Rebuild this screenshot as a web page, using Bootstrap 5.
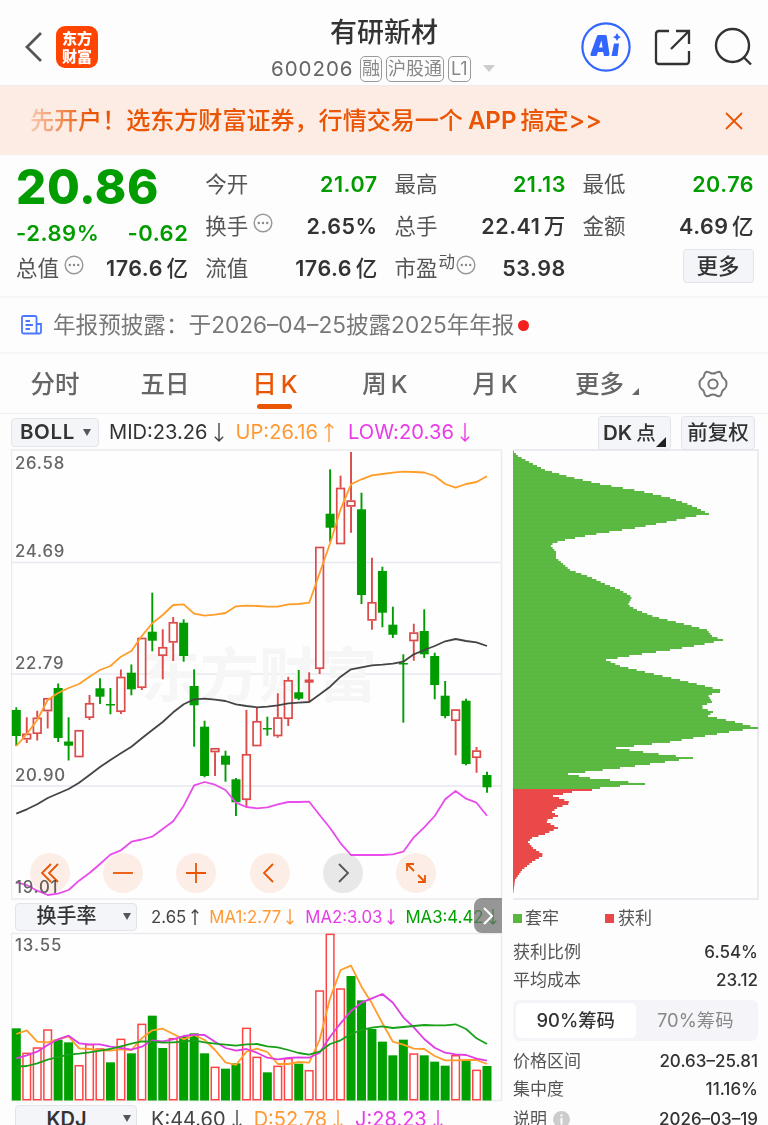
<!DOCTYPE html>
<html lang="zh-CN">
<head>
<meta charset="utf-8">
<meta name="viewport" content="width=device-width, initial-scale=1">
<title>有研新材 600206</title>
<link href="https://cdn.jsdelivr.net/npm/bootstrap@5.3.0/dist/css/bootstrap.min.css" rel="stylesheet">
<style>
:root{--ink:#333;--mute:#666;--down:#009c00;--brand:#ea5504;--mid:#f93;--low:#e83ce8}
body{font-family:Inter,"Noto Sans CJK SC",sans-serif;color:var(--ink);background:#fdfdfd;width:768px;height:1125px;overflow:hidden;line-height:1;-webkit-font-smoothing:antialiased}
svg{display:block;flex:none}
.topbar{height:86px;border-bottom:1px solid #ecebf0;padding:0 14px 0 25px}
.brandbox{width:42px;height:42px;border-radius:9px;background:#ff4400;color:#fff;font:900 15px/18px "Noto Sans CJK SC",sans-serif;margin-left:13px;padding-top:3px}
.stock{position:absolute;left:0;right:0;top:0;width:768px;pointer-events:none}
.stock h1{font-size:27px;font-weight:500;line-height:30px;margin:18px 0 0}
.codeline{margin:8px 0 0 271px}
.code{font-size:20.5px;letter-spacing:.95px;color:var(--mute);line-height:26px;width:89px;text-align:left}
.tagbox{border:1.5px solid #999;border-radius:5px;height:26px;line-height:24px;font-size:18px;color:#888;padding:0 1px}
.banner{height:69px;background:#fcece4;color:var(--brand);font-size:24.05px;font-weight:500;line-height:69px;padding:0 25px 0 30px}
.fadein{background:linear-gradient(90deg,#f8c9b0,#ea5504 60px);-webkit-background-clip:text;background-clip:text;color:transparent}
.quote{height:143px;border-bottom:2px solid #f5f5f8;padding:9px 14px 0 16px;display:grid;grid-template-columns:172px 172px 171px 171px;column-gap:17.2px}
.cell{height:42px;font-size:21.5px;font-weight:500}
.cell .lab{font-weight:400;color:#555}
.cell .num{letter-spacing:.55px;font-weight:600;margin-right:-.5px}
.grn{color:var(--down)}
.price{font-size:47.5px;font-weight:800;letter-spacing:.6px;height:48px;line-height:46px;color:var(--down)}
.chg .num{font-size:22px}
.pill{background:#f3f5f8;border:1.5px solid #e3e4e9;border-radius:4px}
.notice{height:56px;border-bottom:2px solid #f5f5f8;padding-left:21px;font-size:22.6px;color:#777}
.dot{width:11px;height:11px;border-radius:50%;background:#f42020;margin-left:4px}
.tabs{height:60px;border-bottom:1px solid #f0f0f4;font-size:24.5px;font-weight:500;color:var(--mute);position:relative}
.tabs>div{width:110px;text-align:center;line-height:61px;position:relative;white-space:nowrap}
.tabs .on{color:var(--brand)}
.tabs .on:after{content:"";position:absolute;left:37px;bottom:4px;width:35px;height:5px;border-radius:3px;background:var(--brand)}
.legend{height:35px;padding:2px 0 0 11px;font-size:20.5px}
.legend .pill{height:29px;font-weight:600}
.legend>span{font-size:20.1px}
.kline{position:relative;width:491px;margin-left:11px}
.tools{position:absolute;left:19px;top:404px;mix-blend-mode:multiply}
.tools>span{width:40px;height:40px;border-radius:50%;background:rgba(252,226,212,.55);display:flex;align-items:center;justify-content:center}
.tools .off{background:rgba(215,215,215,.55)}
.chips{width:245px;margin-left:11px}
.chips .kv{height:28px;font-size:17px;color:#555}
.chips .kv b{font-weight:500;color:#333;font-size:17px}
.seg{height:41px;background:#f5f5f9;border-radius:6px;padding:3px;font-size:18.4px;margin:6px 0}
.seg>div{flex:1;text-align:center;line-height:35px;border-radius:5px}
.ind{height:32px;padding:2px 0 0 4px;font-size:16.8px;position:relative}
.ind .pill{width:122px;height:28px;font-size:20px;font-weight:500;position:relative;text-align:center;line-height:25px;padding-right:19px}
.ind .pill svg{position:absolute;right:4px;top:9px}
.more{position:absolute;left:463px;top:-2px;width:28px;height:35px;background:rgba(110,110,110,.72);border-radius:8px 0 0 8px;display:flex;align-items:center;justify-content:center}
</style>
</head>
<body>
<header class="topbar d-flex align-items-center position-relative">
  <svg width="18" height="30" viewBox="0 0 18 30" class="mt-2"><path d="M16 1 2 15 16 29" fill="none" stroke="#555" stroke-width="2.8"/></svg>
  <div class="brandbox text-center mt-2">东方<br>财富</div>
  <div class="stock text-center">
    <h1>有研新材</h1>
    <div class="codeline d-flex align-items-center"><span class="code">600206</span><span class="tagbox me-1">融</span><span class="tagbox me-1">沪股通</span><span class="tagbox" style="padding:0 2px">L1</span>
      <svg width="12" height="8" style="margin-left:12px"><path d="M0 0H12L6 7Z" fill="#ccc"/></svg></div>
  </div>
  <div class="ms-auto d-flex align-items-center mt-2">
    <svg width="50" height="50" viewBox="0 0 50 50" fill="#3366ff"><circle cx="25" cy="25" r="23.6" fill="none" stroke="#3366ff" stroke-width="2.2"/><path fill-rule="evenodd" d="M17.500 13H24.500Q25.500 13 25.700 14L28.500 32Q28.500 34 27 34H23L22.200 30H17L15.500 34H10.500Q9 34 9.500 32L16 14Q16.500 13 17.500 13ZM20.500 18.500 18 25.500H21.500ZM33 21.500h5L36.500 34H30.500ZM36 11q.8 3 4 4-3.200 1-4 4-.8-3-4-4 3.200-1 4-4Z"/></svg>
    <svg width="38" height="38" viewBox="0 0 38 38" style="margin-left:23px" fill="none" stroke="#333" stroke-width="2.3"><path d="M15 3H5Q2 3 2 6V33Q2 36 5 36H32Q35 36 35 33V23M22 3H35V16M35 3 17 21"/></svg>
    <svg width="40" height="40" viewBox="0 0 40 40" style="margin-left:22px" fill="none" stroke="#333" stroke-width="2.4"><circle cx="18.500" cy="18.500" r="16.500"/><path d="M29.500 30 37 37.500"/></svg>
  </div>
</header>

<div class="banner d-flex align-items-center"><span class="fadein">先开户！</span><span>选东方财富证券，行情交易一个</span><span style="margin:0 4px 0 5px;font-weight:600">APP</span><span>搞定</span><span style="font-size:25px">&gt;&gt;</span>
  <svg class="ms-auto" width="18" height="18" viewBox="0 0 18 18"><path d="M1 1 17 17M17 1 1 17" stroke="#ea5504" stroke-width="1.8"/></svg></div>

<section class="quote">
  <div>
    <div class="price">20.86</div>
    <div class="cell chg grn d-flex align-items-center justify-content-between"><span class="num">-2.89%</span><span class="num">-0.62</span></div>
    <div class="cell d-flex align-items-center" style="height:30px"><span class="lab">总值</span><svg class="dots"></svg><span class="ms-auto num">176.6</span><span class="ms-1">亿</span></div>
  </div>
  <div>
    <div class="cell d-flex align-items-center"><span class="lab">今开</span><span class="ms-auto num grn">21.07</span></div>
    <div class="cell d-flex align-items-center"><span class="lab">换手</span><svg class="dots"></svg><span class="ms-auto num">2.65%</span></div>
    <div class="cell d-flex align-items-center"><span class="lab">流值</span><span class="ms-auto num">176.6</span><span class="ms-1">亿</span></div>
  </div>
  <div>
    <div class="cell d-flex align-items-center"><span class="lab">最高</span><span class="ms-auto num grn">21.13</span></div>
    <div class="cell d-flex align-items-center"><span class="lab">总手</span><span class="ms-auto num">22.41</span><span class="ms-1">万</span></div>
    <div class="cell d-flex align-items-center"><span class="lab">市盈</span><span class="lab" style="font-size:16.500px;margin:0 0 13px 1px">动</span><svg class="dots" data-tight></svg><span class="ms-auto num">53.98</span></div>
  </div>
  <div>
    <div class="cell d-flex align-items-center"><span class="lab">最低</span><span class="ms-auto num grn">20.76</span></div>
    <div class="cell d-flex align-items-center"><span class="lab">金额</span><span class="ms-auto num">4.69</span><span class="ms-1">亿</span></div>
    <div class="pill cell ms-auto text-center" style="width:71px;height:34px;line-height:33px;margin-top:1px">更多</div>
  </div>
</section>

<div class="notice d-flex align-items-center">
  <svg width="21" height="20" viewBox="0 0 21 20" fill="none" stroke="#4a78ff" stroke-width="1.800"><path d="M15.500 18.500V2.500Q15.500 1 14 1H2.500Q1 1 1 2.500V17Q1 18.500 2.500 18.500H18.500Q20 18.500 20 17V9H15.500M4.500 6H9M4.500 10H12M4.500 14H9"/></svg>
  <span style="margin-left:11px">年报预披露：</span><span>于2026–04–25披露2025年年报</span><span class="dot"></span>
</div>

<nav class="tabs d-flex">
  <div>分时</div><div>五日</div><div class="on">日<span class="ms-1">K</span></div><div>周<span class="ms-1">K</span></div><div>月<span class="ms-1">K</span></div>
  <div style="width:98px;padding-left:1px">更多</div>
  <svg width="8" height="8" style="margin:34px 0 0 -16px"><path d="M7 0V7H0Z" fill="#666"/></svg>
  <svg width="30" height="30" viewBox="-15 -15 30 30" style="margin:15px 0 0 58px" fill="none" stroke="#777" stroke-width="2"><circle r="4.600"/><path stroke-linejoin="round" d="M-6.500-12.300Q-4-12.300-2.500-11Q0-9.800 2.500-11Q4-12.300 6.500-12.300Q8.800-11 8.800-8.500Q9.300-6 11.500-5Q13.500-3.500 13.500 0Q13.500 3.500 11.500 5Q9.300 6 8.800 8.500Q8.800 11 6.500 12.300Q4 12.300 2.500 11Q0 9.800-2.500 11Q-4 12.300-6.500 12.300Q-8.800 11-8.800 8.500Q-9.300 6-11.500 5Q-13.500 3.500-13.500 0Q-13.500-3.500-11.500-5Q-9.300-6-8.800-8.500Q-8.800-11-6.500-12.300Z"/></svg>
</nav>

<div class="legend d-flex align-items-center">
  <div class="pill d-flex align-items-center" style="width:88px;padding-left:8px"><span style="letter-spacing:.6px">BOLL</span><svg width="8" height="8" style="margin-left:8px"><path d="M0 0H8L4 7Z" fill="#555"/></svg></div>
  <span style="margin-left:10px">MID:23.26</span><svg class="arr" data-c="#444"></svg>
  <span style="margin-left:12px;color:var(--mid)">UP:26.16</span><svg class="arr" data-c="#f93" data-up></svg>
  <span style="margin-left:14px;color:var(--low);letter-spacing:.1px">LOW:20.36</span><svg class="arr" data-c="#e83ce8"></svg>
  <div class="ms-auto pill" style="width:73px;height:34px;padding:0 0 0 4px;line-height:32px;white-space:nowrap;position:relative">DK<span class="ms-1" style="font-size:19.500px;font-weight:500">点</span><svg width="10" height="10" style="position:absolute;right:4px;bottom:2px"><path d="M10 0V10H0Z" fill="#222"/></svg></div>
  <div class="pill text-center" style="width:74px;height:34px;margin:0 13px 0 10px;line-height:32px;font-weight:500">前复权</div>
</div>

<main class="d-flex">
  <div class="kline">
    <svg id="k" width="492" height="451" viewBox="11 449 492 451"></svg>
    <div class="tools d-flex" id="tools">
      <span><svg width="18" height="20" fill="none" stroke="#ea5504" stroke-width="1.800"><path d="M10 1 1 10 10 19M17 1 8 10 17 19"/></svg></span>
      <span><svg width="20" height="20" stroke="#ea5504" stroke-width="1.800"><path d="M0 10H20"/></svg></span>
      <span><svg width="20" height="20" stroke="#ea5504" stroke-width="1.800"><path d="M0 10H20M10 0V20"/></svg></span>
      <span><svg width="12" height="20" fill="none" stroke="#ea5504" stroke-width="1.800" style="margin-right:3px"><path d="M11 1 2 10 11 19"/></svg></span>
      <span class="off"><svg width="12" height="20" fill="none" stroke="#555" stroke-width="1.800" style="margin-left:3px"><path d="M1 1 10 10 1 19"/></svg></span>
      <span><svg width="20" height="20" fill="none" stroke="#ea5504" stroke-width="1.800"><path d="M1 8V1H8M1 1 8 8M12 19H19V12M19 19 12 12"/></svg></span>
    </div>
    <div class="ind d-flex align-items-center">
      <div class="pill">换手率<svg width="9" height="8"><path d="M0 0H8L4 7Z" fill="#555"/></svg></div>
      <span style="margin-left:14px;color:#444">2.65</span><svg class="arr" data-c="#444" data-s data-up></svg>
      <span style="margin-left:10px;color:var(--mid)">MA1:2.77</span><svg class="arr" data-c="#f93" data-s></svg>
      <span style="margin-left:11px;color:var(--low)">MA2:3.03</span><svg class="arr" data-c="#e83ce8" data-s></svg>
      <span style="margin-left:10px;color:#00a000">MA3:4.42</span><svg class="arr" data-c="#00a000" data-s></svg>
      <div class="more"><svg width="10" height="18" fill="none" stroke="#fff" stroke-width="2"><path d="M1 1 9 9 1 17"/></svg></div>
    </div>
    <svg id="v" width="492" height="170" viewBox="11 932 492 170"></svg>
    <div class="ind d-flex align-items-center" style="font-size:20px">
      <div class="pill" style="line-height:27px;font-weight:600">KDJ<svg width="9" height="8"><path d="M0 0H8L4 7Z" fill="#555"/></svg></div>
      <span style="margin-left:14px;color:#444">K:44.60</span><svg class="arr" data-c="#444"></svg>
      <span style="margin-left:12px;color:var(--mid)">D:52.78</span><svg class="arr" data-c="#f93"></svg>
      <span style="margin-left:12px;color:var(--low)">J:28.23</span><svg class="arr" data-c="#e83ce8"></svg>
    </div>
  </div>
  <div class="chips">
    <svg id="c" width="247" height="451" viewBox="513 449 247 451"></svg>
    <div class="d-flex align-items-center" style="height:36px;margin-bottom:2px;font-size:17px;color:#555"><svg width="9" height="9"><path d="M0 0H9V9H0Z" fill="#5ab73e"/></svg><span style="margin-left:3px">套牢</span><svg width="9" height="9" style="margin-left:46px"><path d="M0 0H9V9H0Z" fill="#ea4848"/></svg><span style="margin-left:4px">获利</span></div>
    <div class="kv d-flex align-items-center justify-content-between">获利比例<b>6.54%</b></div>
    <div class="kv d-flex align-items-center justify-content-between">平均成本<b>23.12</b></div>
    <div class="seg d-flex"><div class="bg-white" style="font-weight:500">90%筹码</div><div style="color:#888">70%筹码</div></div>
    <div class="kv d-flex align-items-center justify-content-between">价格区间<b>20.63–25.81</b></div>
    <div class="kv d-flex align-items-center justify-content-between">集中度<b>11.16%</b></div>
    <div class="kv d-flex align-items-center justify-content-between" style="height:32px"><span class="d-flex align-items-center">说明<svg width="17" height="17" style="margin-left:6px"><circle cx="8.500" cy="8.500" r="8.500" fill="#ccc"/><path d="M8.500 3.500V5.500M8.500 7V13.500" stroke="#fff" stroke-width="2"/></svg></span><b>2026–03–19</b></div>
  </div>
</main>

<script src="https://cdn.jsdelivr.net/npm/bootstrap@5.3.0/dist/js/bootstrap.bundle.min.js"></script>
<script>
// Small repeated glyphs
document.querySelectorAll('.dots').forEach(s=>{
  s.setAttribute('width',20);s.setAttribute('height',20);
  s.style.margin='-9px 0 0 '+('tight' in s.dataset?1:5)+'px';
  s.innerHTML='<circle cx="10" cy="10" r="8.800" fill="none" stroke="#999" stroke-width="1.500"/><g fill="#888"><circle cx="5.800" cy="10" r="1.200"/><circle cx="10" cy="10" r="1.200"/><circle cx="14.200" cy="10" r="1.200"/></g>';
});
document.querySelectorAll('.arr').forEach(s=>{
  const small='s' in s.dataset,h=small?16:19,w=small?8:10;
  s.setAttribute('width',w);s.setAttribute('height',h);s.style.marginLeft=small?'5px':'6px';
  const m=w/2,a=m-.8;
  const d='up' in s.dataset?`M${m} ${h}V1M${m-a} ${1+a}L${m} 1L${m+a} ${1+a}`:`M${m} 0V${h-1}M${m-a} ${h-1-a}L${m} ${h-1}L${m+a} ${h-1-a}`;
  s.innerHTML=`<path d="${d}" fill="none" stroke="${s.dataset.c}" stroke-width="1.400"/>`;
});
const X=i=>16.3+i*10.46, GREEN='#009c00', RED='#dc4a4a';
const line=(a,c,f=v=>v)=>`<polyline fill="none" stroke="${c}" stroke-width="1.800" stroke-linejoin="round" points="${a.map((v,i)=>X(i).toFixed(1)+','+f(v)).join(' ')}"/>`;
// Daily candles: direction, high, body top, body bottom, low
const candles=[['g',707.3,710,736,746],['r',717.3,733.5,739.5,743],['r',710.7,717.5,734,740.5],['r',698,698,711.3,728.5],['g',683.5,688,738,742],['g',717.3,741.5,745.7,760.5],['r',730,730,757.3,757.3],['r',695,703,718,720],['g',678.3,688.3,696.7,704],['g',688,704,705.5,714.3],['r',669.5,676.7,712,714],['g',664.5,672.7,689.3,695.3],['r',637.7,637.7,688,690],['g',592.7,631.7,640.7,651.3],['r',629.3,647,656,679.3],['r',617,622,642.7,661],['g',619.3,622.7,656,661.7],['g',669.3,686,705.3,746.7],['g',720.7,726.7,776,777.3],['r',748,748,752.3,776],['g',750.7,755.7,764.7,781.7],['g',778,779.3,802.3,816],['r',710,754,800,807.3],['r',707.3,721,746.3,746.3],['g',716.7,728,729.5,735.7],['r',693.3,717.3,736.3,737.7],['r',676.7,680,719,726],['g',670,692.3,698.7,700],['f',672.3,679.5,682.7,701.7],['r',546.7,546.7,669,674],['g',469.3,513.7,527.7,541.7],['r',475.7,487.7,544.3,544.3],['r',452,500.3,506.7,532.7],['g',492.7,509.3,595,604],['r',557.7,602,620.7,629.7],['g',566.7,571,612.7,627.3],['g',606.7,624.7,634.7,638],['g',654.3,663,664.5,722.7],['r',623.7,632.3,641.3,660.7],['g',609.3,631,654.3,658],['g',652.7,656,685,699.3],['g',681,695.7,716,718.3],['r',709.3,709.3,721,755.3],['g',698.7,700.7,764,765.3],['r',747,750.3,758,772.7],['g',771.7,775,787.3,792.7]];
const up=[746,734,720,700,693,688,684,676.7,670,666,656.7,651,636,623.3,615,605,604.3,613.7,615.7,614.7,613,606.3,605.7,606,606.7,606.7,604.3,604,602.7,573.3,543.3,509.3,484.3,479.3,475.3,474,472.7,471.7,472,472.5,476,484,487.7,484,482,476.3];
const mid=[813.7,809.3,804.3,798,793.5,789,782.7,775,767,760,753.3,746.7,738.3,730,722,712.3,704.3,699.3,698.7,699.7,701,704.3,706,707.3,706.7,705.3,703.3,702.7,702,694.5,686.7,676.7,669.3,667.3,665.3,664.7,663.7,661.7,654.3,650,646,641.3,639,641,642.3,646];
const low=[882.3,885,890.7,895,893.7,890,880.7,873,864,854.7,850.3,841.7,839.5,836.7,829,821.3,805.7,785.3,782,784.7,790,802.7,807,808.3,807.3,804.3,802,802,801.7,815,828,843.3,855,855,855,855,854.3,851.7,837.3,827.3,816,799.3,791,798.7,802.7,815.7];
let h='<rect x="11.500" y="450" width="490" height="449" fill="#fefefe" stroke="#ebebf0" stroke-width="1.500"/>';
h+='<path d="M11 562.500H502M11 674H502M11 786H502" stroke="#e6e9f0" stroke-width="1.500"/>';
h+='<text x="141" y="697" font-size="59" font-weight="700" fill="#f6f6f6" font-family="Noto Sans CJK SC">东方财富</text>';
candles.forEach(([k,hi,t,b,lo],i)=>{const x=X(i);
  if(k==='r')h+=`<path d="M${x} ${hi}V${t}M${x} ${b}V${lo}" stroke="${RED}" stroke-width="1.900"/><rect x="${x-3.8}" y="${t+.8}" width="7.600" height="${b-t-1.6}" fill="none" stroke="${RED}" stroke-width="1.700"/>`;
  else{const c=k==='g'?GREEN:RED;h+=`<path d="M${x} ${hi}V${lo}" stroke="${c}" stroke-width="1.900"/><rect x="${x-4.5}" y="${t}" width="9" height="${b-t}" fill="${c}"/>`;}
});
h+=line(up,'#ff9d28')+line(mid,'#444')+line(low,'#e94bec');
h+='<g font-size="16.800" font-weight="500" fill="#666" letter-spacing=".75">'+[['26.58',468.5],['24.69',556.5],['22.79',668.5],['20.90',780.5],['19.01',892.5]].map(([s,y])=>`<text x="15" y="${y}">${s}</text>`).join('')+'</g>';
k.innerHTML=h;
// Turnover histogram and its averages, in thirds of a pixel below y=900
const tops=[385,458,442,388,419,427,495,432,445,487,416,460,371,347,444,414,409,400,460,500,506,490,383,470,517,497,474,491,510,271,101,265,228,301,387,425,466,419,460,466,485,497,465,481,509,498];
const reds=new Set([1,2,3,6,7,8,10,12,15,19,22,23,25,26,28,29,30,31,38,42,44]);
const Y=v=>(900+v/3).toFixed(1);
const m1=[402,391,425,427,418,409,445,447,451,452,448,450,415,391,386,402,418,405,420,450,487,495,455,446,456,492,492,486,488,420,295,210,197,260,310,370,425,434,446,447,468,481,481,480,480,492];
const m2=[475,466,455,435,418,407,430,433,433,440,444,449,440,421,424,418,408,404,405,425,444,452,447,458,473,478,474,472,473,458,410,370,333,308,295,282,308,352,382,417,443,458,463,465,476,482];
const m3=[500,498,490,479,471,464,461,457,452,447,439,431,424,425,428,427,425,421,427,431,434,437,433,432,439,442,450,459,464,455,432,421,402,390,383,379,384,381,378,375,376,376,373,387,415,432];
h='<rect x="11.500" y="933.500" width="490" height="167" fill="#fefefe" stroke="#ebebf0" stroke-width="1.500"/>';
tops.forEach((t,i)=>{const x=X(i),y=900+t/3;
  h+=!reds.has(i)?`<rect x="${x-4.5}" y="${y}" width="9" height="${1100.5-y}" fill="#00a000"/>`:`<rect x="${x-3.8}" y="${y+.7}" width="7.600" height="${1099-y}" fill="none" stroke="#ff4444" stroke-width="1.500"/>`;});
h+=line(m1,'#ff9d28',Y)+line(m2,'#e03ce4',Y)+line(m3,'#18a018',Y);
h+='<text x="15" y="950.500" font-size="16.800" font-weight="500" fill="#666" letter-spacing=".9">13.55</text>';
v.innerHTML=h;
// Cost distribution outline: y, right edge
const prof=[[452,514],[456,518],[463,531],[470,545],[477,570],[484,600],[491,640],[498,670],[503,685],[508,697],[514,709],[517,690],[521,672],[528,635],[535,590],[541,560],[545,550],[552,556],[558,556],[563,562],[570,570],[577,590],[584,605],[590,620],[597,632],[601,630],[605,628],[610,637],[617,655],[623,680],[630,707],[636,712],[640,723],[645,700],[650,670],[655,635],[660,606],[666,620],[672,645],[680,680],[686,705],[691,724],[695,708],[702,712],[707,700],[712,713],[716,708],[722,735],[728,758],[731,735],[736,705],[742,670],[748,616],[753,650],[758,693],[762,665],[768,620],[774,568],[778,590],[781,620],[784,645],[786,620],[788,600],[790,592],[792,572],[794,563],[796,553],[799,562],[803,571],[808,557],[812,552],[816,558],[821,545],[828,558],[834,545],[838,532],[842,528],[848,533],[855,544],[862,532],[870,522],[880,515],[895,513]];
h='<path d="M513 450H758V899H513" fill="none" stroke="#e4e4ec" stroke-width="1.500"/>';
for(let y=452,j=0;y<894;y+=2){while(j<prof.length-2&&prof[j+1][0]<=y)j++;
  const [a,p]=prof[j],[b,q]=prof[j+1],e=p+(q-p)*(y-a)/(b-a);
  h+=`<rect x="513" y="${y-1}" width="${(e-513).toFixed(1)}" height="2" fill="${y<790?(y%4?'#5dba40':'#59b743'):(y%4?'#ec4848':'#e84a4a')}"/>`;}
c.innerHTML=h;
// Spread the round chart buttons 73px apart
document.querySelectorAll('#tools>span').forEach(e=>e.style.marginRight='33.200px');
</script>
</body>
</html>
